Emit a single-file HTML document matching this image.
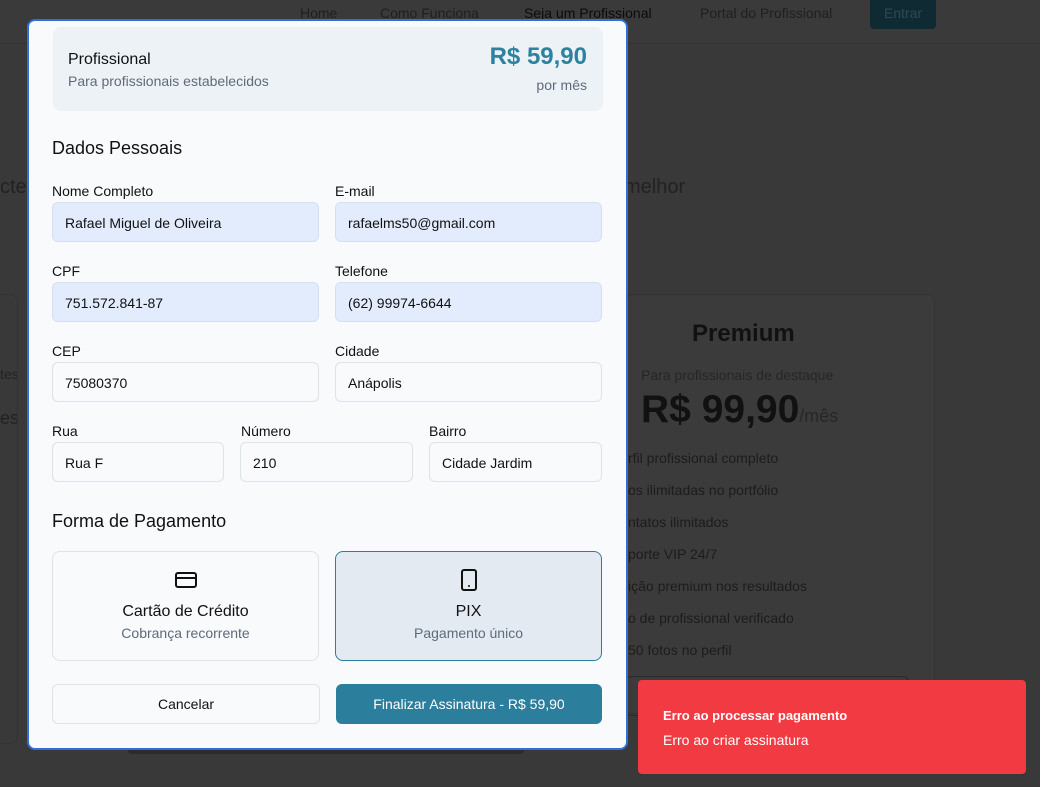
<!DOCTYPE html>
<html><head><meta charset="utf-8"><style>
*{box-sizing:border-box;margin:0;padding:0}
body{width:1040px;height:787px;overflow:hidden;background:#393939;font-family:"Liberation Sans",Arial,sans-serif;position:relative}
.nav{position:absolute;left:0;top:0;width:1040px;height:44px;background:#3a3a3a;border-bottom:1px solid #333}
.nav span{position:absolute;top:5px;font-size:14px;color:#1f1f1f}
.entrar{position:absolute;left:870px;top:0;width:66px;height:29px;background:#0f2a33;border-radius:0 0 4px 4px;color:#2d4b55;font-size:14px;text-align:center;line-height:26px}
.bg{position:absolute;color:#222}
.prem{position:absolute;left:625px;top:294px;width:310px;height:420px;border:1px solid #333;border-radius:8px;background:#3b3b3b}
.modal{position:absolute;left:27px;top:19px;width:601px;height:731px;background:#f8fafc;border:2px solid #2f6fd6;border-radius:8px;overflow:hidden}
.abs{position:absolute}
.plan{left:24px;top:6px;width:550px;height:84px;background:#edf2f7;border-radius:8px}
.lbl{position:absolute;font-size:14px;color:#111}
.inp{position:absolute;height:40px;border:1px solid #dde3ea;border-radius:6px;font-size:14px;color:#111;padding:12px 0 0 12px;background:#f8fafc}
.fill{background:#e3ecfc;border-color:#d5dff0}
.h{position:absolute;font-size:18px;color:#111}
.pay{position:absolute;top:530px;width:267px;height:110px;border:1px solid #dde3ea;border-radius:8px;text-align:center}
.toast{position:absolute;left:638px;top:680px;width:388px;height:94px;background:#f23a43;border-radius:4px;color:#fff}
</style></head><body>
<div class="nav">
<span style="left:300px">Home</span><span style="left:380px">Como Funciona</span><span style="left:524px;color:#0b0b0b">Seja um Profissional</span><span style="left:700px">Portal do Profissional</span>
<div class="entrar">Entrar</div></div>
<div class="bg" style="left:0;top:176px;font-size:20px">cte</div>
<div class="bg" style="left:624px;top:176px;font-size:20px">melhor</div>
<div class="bg" style="left:0;top:366px;font-size:14px">tes</div>
<div class="bg" style="left:0;top:408px;font-size:18px">es</div>
<div class="abs" style="left:0;top:294px;width:18px;height:450px;border:1px solid #333;border-left:none;border-radius:0 8px 8px 0"></div>
<div class="prem"></div>
<div class="bg" style="left:692px;top:320px;font-size:24px;font-weight:bold;color:#111">Premium</div>
<div class="bg" style="left:641px;top:367px;font-size:14px;color:#262626">Para profissionais de destaque</div>
<div class="bg" style="left:641px;top:388px;font-size:39px;font-weight:bold;color:#111">R$ 99,90<span style="font-size:18px;font-weight:normal;color:#262626">/mês</span></div>
<div class="bg" style="left:628px;top:442px;font-size:14px;line-height:32px;color:#1c1c1c">rfil profissional completo<br>os ilimitadas no portfólio<br>ntatos ilimitados<br>porte VIP 24/7<br>ição premium nos resultados<br>o de profissional verificado<br>50 fotos no perfil</div>
<div class="abs" style="left:625px;top:676px;width:284px;height:40px;border:1px solid #2a2a2a;border-radius:6px"></div>
<div class="abs" style="left:128px;top:748px;width:396px;height:6px;background:#2c2c2c;border-radius:0 0 4px 4px"></div>

<div class="modal">
<div class="abs plan">
<div class="abs" style="left:15px;top:24px;font-size:16px;color:#111">Profissional</div>
<div class="abs" style="left:15px;top:46px;font-size:14px;color:#5f6b7a">Para profissionais estabelecidos</div>
<div class="abs" style="right:16px;top:16px;font-size:24px;font-weight:bold;color:#2e82a0">R$ 59,90</div>
<div class="abs" style="right:16px;top:50px;font-size:14px;color:#5f6b7a">por mês</div>
</div>
<div class="h" style="left:23px;top:117px">Dados Pessoais</div>
<div class="lbl" style="left:23px;top:162px">Nome Completo</div>
<div class="lbl" style="left:306px;top:162px">E-mail</div>
<div class="inp fill" style="left:23px;top:181px;width:267px">Rafael Miguel de Oliveira</div>
<div class="inp fill" style="left:306px;top:181px;width:267px">rafaelms50@gmail.com</div>
<div class="lbl" style="left:23px;top:242px">CPF</div>
<div class="lbl" style="left:306px;top:242px">Telefone</div>
<div class="inp fill" style="left:23px;top:261px;width:267px">751.572.841-87</div>
<div class="inp fill" style="left:306px;top:261px;width:267px">(62) 99974-6644</div>
<div class="lbl" style="left:23px;top:322px">CEP</div>
<div class="lbl" style="left:306px;top:322px">Cidade</div>
<div class="inp" style="left:23px;top:341px;width:267px">75080370</div>
<div class="inp" style="left:306px;top:341px;width:267px">Anápolis</div>
<div class="lbl" style="left:23px;top:402px">Rua</div>
<div class="lbl" style="left:212px;top:402px">Número</div>
<div class="lbl" style="left:400px;top:402px">Bairro</div>
<div class="inp" style="left:23px;top:421px;width:172px">Rua F</div>
<div class="inp" style="left:211px;top:421px;width:173px">210</div>
<div class="inp" style="left:400px;top:421px;width:173px">Cidade Jardim</div>
<div class="h" style="left:23px;top:490px">Forma de Pagamento</div>
<div class="pay" style="left:23px">
<svg width="24" height="24" viewBox="0 0 24 24" style="margin-top:16px" fill="none" stroke="#111" stroke-width="2" stroke-linecap="round" stroke-linejoin="round"><rect x="2" y="5" width="20" height="14" rx="2"/><line x1="2" y1="10" x2="22" y2="10"/></svg>
<div style="font-size:16px;color:#111;margin-top:6px">Cartão de Crédito</div>
<div style="font-size:14px;color:#5f6b7a;margin-top:4px">Cobrança recorrente</div></div>
<div class="pay" style="left:306px;background:#e3eaf1;border-color:#2b7e9c">
<svg width="24" height="24" viewBox="0 0 24 24" style="margin-top:16px" fill="none" stroke="#111" stroke-width="2" stroke-linecap="round" stroke-linejoin="round"><rect x="5" y="2" width="14" height="20" rx="2"/><line x1="12" y1="18" x2="12.01" y2="18"/></svg>
<div style="font-size:16px;color:#111;margin-top:6px">PIX</div>
<div style="font-size:14px;color:#5f6b7a;margin-top:4px">Pagamento único</div></div>
<div class="abs" style="left:23px;top:663px;width:268px;height:40px;border:1px solid #dde3ea;border-radius:6px;text-align:center;line-height:38px;font-size:14px;color:#111">Cancelar</div>
<div class="abs" style="left:307px;top:663px;width:266px;height:40px;background:#2b7e9c;border-radius:6px;text-align:center;line-height:40px;font-size:14px;color:#fff">Finalizar Assinatura - R$ 59,90</div>
</div>
<div class="toast">
<div class="abs" style="left:25px;top:28px;font-size:13px;font-weight:bold">Erro ao processar pagamento</div>
<div class="abs" style="left:25px;top:52px;font-size:14px">Erro ao criar assinatura</div>
</div>
</body></html>
